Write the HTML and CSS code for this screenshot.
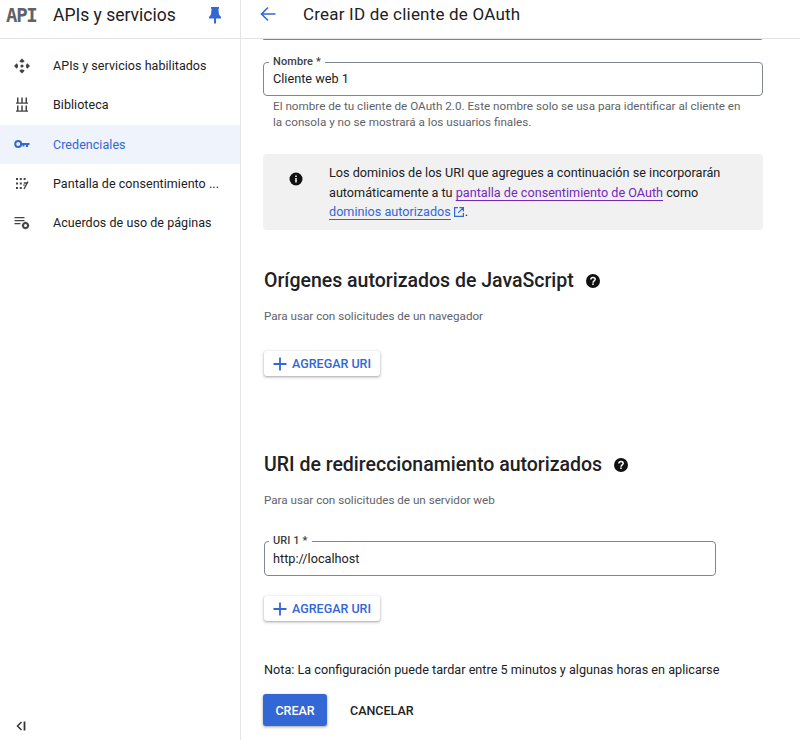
FILE: index.html
```html
<!DOCTYPE html>
<html lang="es">
<head>
<meta charset="utf-8">
<title>Crear ID de cliente de OAuth</title>
<link rel="stylesheet" href="styles.css">
</head>
<body>
<aside class="sidebar">
  <header class="side-head">
    <span class="api-logo">API</span>
    <span class="side-title">APIs y servicios</span>
    <svg class="pin" viewBox="0 0 14 18" width="14" height="18"><path fill="#3367d6" d="M3 1h8v1.500l-.6.5.6 5.500L13 11v1.500H8V17l-1 1-1-1v-4.500H1V11l2-2.500L3.600 3 3 2.500z"/></svg>
  </header>
  <nav class="side-nav">
    <a class="nav-item">
      <svg class="nav-icon" viewBox="0 0 18 18" width="18" height="18"><path fill="#444" d="M9 1.500 6.300 4.200 8 5.500h2l1.700-1.300zM3.700 6.300 1 9l2.700 2.700L5 10V8zm10.600 0L13 8v2l1.300 1.700L17 9zM8 12.500l-1.700 1.300L9 16.500l2.700-2.700-1.700-1.300z"/><circle cx="9" cy="9" r="1.600" fill="#444"/></svg>
      <span>APIs y servicios habilitados</span>
    </a>
    <a class="nav-item">
      <svg class="nav-icon" viewBox="0 0 18 18" width="18" height="18"><path fill="#444" d="M4 1.500h1.500v5H4zM8.250 1.500h1.500v5h-1.500zM12.500 1.500H14v5h-1.500zM3 6.500h12v1.300H3zM4 9.500h1.500v5H4zM8.250 9.500h1.500v5h-1.500zM12.500 9.500H14v5h-1.500zM3 14.500h12v1.300H3z"/></svg>
      <span>Biblioteca</span>
    </a>
    <a class="nav-item active">
      <svg class="nav-icon" viewBox="0 0 18 18" width="18" height="18"><circle cx="5.200" cy="9" r="3" fill="none" stroke="#3367d6" stroke-width="2"/><path fill="#3367d6" d="M8 8h8.500v2H15v2h-2v-2h-1.500v1.500h-2V10H8z"/></svg>
      <span>Credenciales</span>
    </a>
    <a class="nav-item">
      <svg class="nav-icon" viewBox="0 0 18 18" width="18" height="18"><g fill="#444"><rect x="3" y="3" width="2" height="2"/><rect x="6.800" y="3" width="2" height="2"/><rect x="10.600" y="3" width="2" height="2"/><rect x="3" y="7.500" width="2" height="2"/><rect x="6.800" y="7.500" width="2" height="2"/><rect x="3" y="12" width="2" height="2"/><rect x="6.800" y="12" width="2" height="2"/></g><path fill="none" stroke="#444" stroke-width="1.400" d="m10.500 9.500 1 1M11 14 15 6.500M10.800 8H15"/></svg>
      <span>Pantalla de consentimiento ...</span>
    </a>
    <a class="nav-item">
      <svg class="nav-icon" viewBox="0 0 18 18" width="18" height="18"><path fill="#444" d="M1.500 3h10v1.300h-10zM1.500 6h10v1.300h-10zM1.500 9h6v1.300h-6z"/><circle cx="12.500" cy="11.500" r="2.500" fill="none" stroke="#444" stroke-width="2"/><path stroke="#444" stroke-width="1.500" d="M12.500 7.800v1.500M12.500 13.700v1.500M8.800 11.500h1.500M14.700 11.500h1.500"/></svg>
      <span>Acuerdos de uso de páginas</span>
    </a>
  </nav>
  <svg class="collapse" viewBox="0 0 12 12" width="12" height="12"><path fill="none" stroke="#333" stroke-width="1.500" d="M6.500 2 2.500 6l4 4"/><path stroke="#333" stroke-width="1.800" d="M9.500 1.500v9"/></svg>
</aside>
<div class="page">
  <header class="top-bar">
    <svg class="back" viewBox="0 0 16 16" width="16" height="16"><path fill="none" stroke="#3367d6" stroke-width="1.600" d="M15.500 8H1.500M8 1.500 1.500 8 8 14.500"/></svg>
    <h1>Crear ID de cliente de OAuth</h1>
  </header>
  <main class="content">
    <div class="prev-edge"></div>
    <div class="field name-field">
      <label class="field-label">Nombre *</label>
      <div class="field-value">Cliente web 1</div>
    </div>
    <p class="helper">El nombre de tu cliente de OAuth 2.0. Este nombre solo se usa para identificar al cliente en la consola y no se mostrará a los usuarios finales.</p>
    <div class="info">
      <svg class="info-icon" viewBox="0 0 14 14" width="14" height="14"><circle cx="7" cy="7" r="6.500" fill="#111"/><path fill="#f1f1f1" d="M6.200 6h1.600v4.500H6.200zM6.200 3.400h1.600V5H6.200z"/></svg>
      <p>Los dominios de los URI que agregues a continuación se incorporarán automáticamente a tu <a class="visited">pantalla de consentimiento de OAuth</a> como <a class="link">dominios autorizados</a><svg class="ext" viewBox="0 0 12 12" width="12" height="12"><path fill="none" stroke="#3367d6" stroke-width="1.200" d="M5 1.600H1.600v8.800h8.800V7M6.500 1.600h3.900v3.900M10.200 1.800 5.200 6.800"/></svg>.</p>
    </div>
    <section class="section first">
      <h2>Orígenes autorizados de JavaScript <svg class="help" viewBox="0 0 14 14" width="14" height="14"><circle cx="7" cy="7" r="7" fill="#111"/><path fill="none" stroke="#fff" stroke-width="1.500" d="M4.800 5.500C4.900 4.200 5.800 3.500 7 3.500c1.300 0 2.200.8 2.200 1.800C9.200 6.900 7 6.900 7 8.700"/><rect x="6.200" y="9.400" width="1.600" height="1.500" fill="#fff"/></svg></h2>
      <p class="sub">Para usar con solicitudes de un navegador</p>
      <button class="add-btn"><svg viewBox="0 0 14 14" width="14" height="14"><path stroke="#3367d6" stroke-width="1.800" d="M7 .5v13M.5 7h13"/></svg>AGREGAR URI</button>
    </section>
    <section class="section second">
      <h2>URI de redireccionamiento autorizados <svg class="help" viewBox="0 0 14 14" width="14" height="14"><circle cx="7" cy="7" r="7" fill="#111"/><path fill="none" stroke="#fff" stroke-width="1.500" d="M4.800 5.500C4.900 4.200 5.800 3.500 7 3.500c1.300 0 2.200.8 2.200 1.800C9.200 6.900 7 6.900 7 8.700"/><rect x="6.200" y="9.400" width="1.600" height="1.500" fill="#fff"/></svg></h2>
      <p class="sub">Para usar con solicitudes de un servidor web</p>
      <div class="field uri-field">
        <label class="field-label">URI 1 *</label>
        <div class="field-value">http://localhost</div>
      </div>
      <button class="add-btn second-btn"><svg viewBox="0 0 14 14" width="14" height="14"><path stroke="#3367d6" stroke-width="1.800" d="M7 .5v13M.5 7h13"/></svg>AGREGAR URI</button>
    </section>
    <p class="note">Nota: La configuración puede tardar entre 5 minutos y algunas horas en aplicarse</p>
    <div class="actions">
      <button class="primary">CREAR</button>
      <button class="text-btn">CANCELAR</button>
    </div>
  </main>
</div>
</body>
</html>
```
FILE: styles.css
```css
* { box-sizing: border-box; }
html, body { margin: 0; height: 740px; overflow: hidden; }
body { display: flex; font-family: Roboto, "Liberation Sans", sans-serif; color: #202124; background: #fff; }
p, h1, h2 { margin: 0; }

.sidebar { position: relative; width: 241px; height: 740px; flex: none; border-right: 1px solid #e4e4e4; }
.side-head { height: 39px; display: flex; align-items: center; padding: 0 0 9px 6px; border-bottom: 1px solid #e4e4e4; }
.api-logo { width: 47px; font-family: "DejaVu Sans Mono", monospace; font-weight: 700; font-size: 19px; letter-spacing: -1.300px; color: #5f6368; }
.side-title { font-size: 17.500px; color: #202124; }
.pin { margin-left: 32px; }
.side-nav { padding-top: 7px; }
.nav-item { height: 39.300px; display: flex; align-items: center; padding-left: 12.500px; font-size: 12.500px; letter-spacing: .05px; color: #202124; }
.nav-item.active { background: #eef3fc; color: #3367d6; }
.nav-icon { flex: none; margin-right: 22.500px; }
.collapse { position: absolute; left: 15px; top: 720px; }

.page { flex: 1; min-width: 0; }
.top-bar { height: 39px; display: flex; align-items: center; padding: 0 0 10px 19px; border-bottom: 1px solid #e4e4e4; }
.back { margin-right: 27px; }
.top-bar h1 { font-size: 17px; font-weight: 400; letter-spacing: .2px; color: #202124; }

.content { padding-left: 22px; width: 522px; }
.prev-edge { height: 1px; width: 499px; background: #80868b; border-radius: 0 0 3px 3px; }
.field { position: relative; border: 1px solid #80868b; border-radius: 4px; display: flex; align-items: center; padding: 0 9px; }
.name-field { height: 34px; margin-top: 22px; width: 500px; padding-bottom: 2px; }
.uri-field { height: 35px; margin-top: 33px; width: 452px; padding-left: 8px; }
.field-label { position: absolute; left: 5px; top: -7px; padding: 0 4px; background: #fff; font-size: 11px; line-height: 12px; font-weight: 500; color: #3c4043; letter-spacing: .1px; }
.uri-field .field-label { left: 4px; }
.field-value { font-size: 12.700px; color: #202124; }
.helper { width: 470px; margin: 2px 0 0 10px; font-size: 11.700px; line-height: 16px; color: #5f6368; }

.info { width: 500px; height: 76px; margin-top: 24px; padding: 9px 33px 0 26px; background: #f1f1f1; border-radius: 4px; display: flex; }
.info-icon { flex: none; margin: 9px 26px 0 0; }
.info p { font-size: 12.650px; line-height: 19.500px; color: #202124; }
.visited { color: #7627bb; text-decoration: underline; text-underline-offset: 3px; }
.link { color: #3367d6; text-decoration: underline; text-underline-offset: 3px; }
.ext { margin: 0 0 -2px 2px; }

.section { padding-left: 1px; }
.section h2 { font-size: 19.500px; line-height: 24px; font-weight: 500; color: #202124; display: flex; align-items: center; gap: 12px; }
.first { margin-top: 39px; }
.second { margin-top: 77px; }
.sub { margin-top: 15px; font-size: 11.650px; line-height: 16px; color: #5f6368; }
.add-btn { margin-top: 27px; width: 116px; height: 25px; display: flex; align-items: center; gap: 5px; padding: 0 0 0 9px; border: 0; border-radius: 3px; background: #fff; font: 500 12.500px Roboto, sans-serif; color: #3367d6; box-shadow: 0 1px 2px rgba(60,64,67,.3), 0 1px 3px 1px rgba(60,64,67,.15); }
.second-btn { margin-top: 20px; }

.note { margin: 41px 0 0 1px; font-size: 12.670px; line-height: 16px; color: #202124; }
.actions { margin: 16px 0 0; display: flex; align-items: center; gap: 23px; }
.primary { width: 64px; height: 32px; border: 0; border-radius: 3px; background: #3367d6; color: #fff; font: 500 12.500px Roboto, sans-serif; box-shadow: 0 1px 2px rgba(60,64,67,.3), 0 1px 3px 1px rgba(60,64,67,.15); }
.text-btn { padding: 0; border: 0; background: none; color: #202124; font: 500 12.500px Roboto, sans-serif; }
```
